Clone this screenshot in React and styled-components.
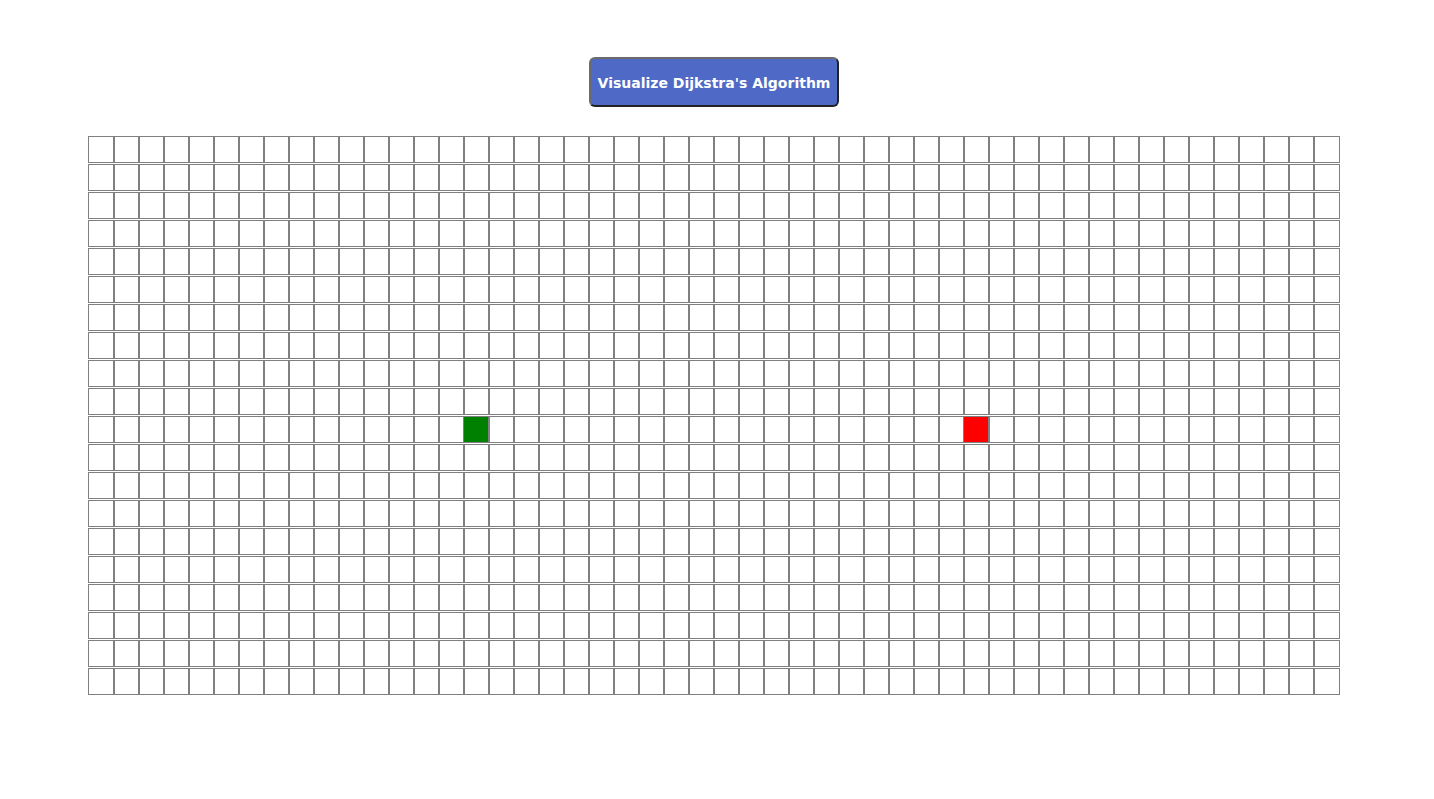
import React from 'react';
import styled, { createGlobalStyle } from 'styled-components';

const ROWS = 20;
const COLS = 50;
const START = { row: 10, col: 15 };
const FINISH = { row: 10, col: 35 };

const GlobalStyle = createGlobalStyle`
  body {
    margin: 0;
    background: #fff;
    font-family: "DejaVu Sans", sans-serif;
  }
`;

const Page = styled.div`
  padding-top: 57px;
  padding-bottom: 40px;
`;

const Toolbar = styled.div`
  display: flex;
  padding-left: 589px;
  margin-bottom: 30px;
`;

const Button = styled.button`
  width: 250px;
  height: 50px;
  box-sizing: border-box;
  background: #4e69c6;
  color: #fff;
  font-family: "DejaVu Sans", sans-serif;
  font-weight: bold;
  font-size: 14px;
  border-radius: 6px;
  border-top: 2px solid #6b6b6b;
  border-left: 2px solid #6b6b6b;
  border-right: 2px solid #222;
  border-bottom: 2px solid #222;
  padding: 2px 0 0;
  cursor: pointer;
`;

const Grid = styled.div`
  display: flex;
  flex-direction: column;
  gap: 3px;
  padding-left: 89px;
`;

const Row = styled.div`
  display: flex;
`;

const Node = styled.div`
  width: 25px;
  height: 25px;
  outline: 1px solid #808080;
  background: ${(p) => (p.$kind === 'start' ? '#008000' : p.$kind === 'finish' ? '#ff0000' : 'transparent')};
`;

const kindOf = (r, c) => {
  if (r === START.row && c === START.col) return 'start';
  if (r === FINISH.row && c === FINISH.col) return 'finish';
  return 'empty';
};

export default function App() {
  const rows = Array.from({ length: ROWS }, (_, r) => r);
  const cols = Array.from({ length: COLS }, (_, c) => c);
  return (
    <Page>
      <GlobalStyle />
      <Toolbar>
        <Button>Visualize Dijkstra's Algorithm</Button>
      </Toolbar>
      <Grid>
        {rows.map((r) => (
          <Row key={r}>
            {cols.map((c) => (
              <Node key={c} $kind={kindOf(r, c)} />
            ))}
          </Row>
        ))}
      </Grid>
    </Page>
  );
}
